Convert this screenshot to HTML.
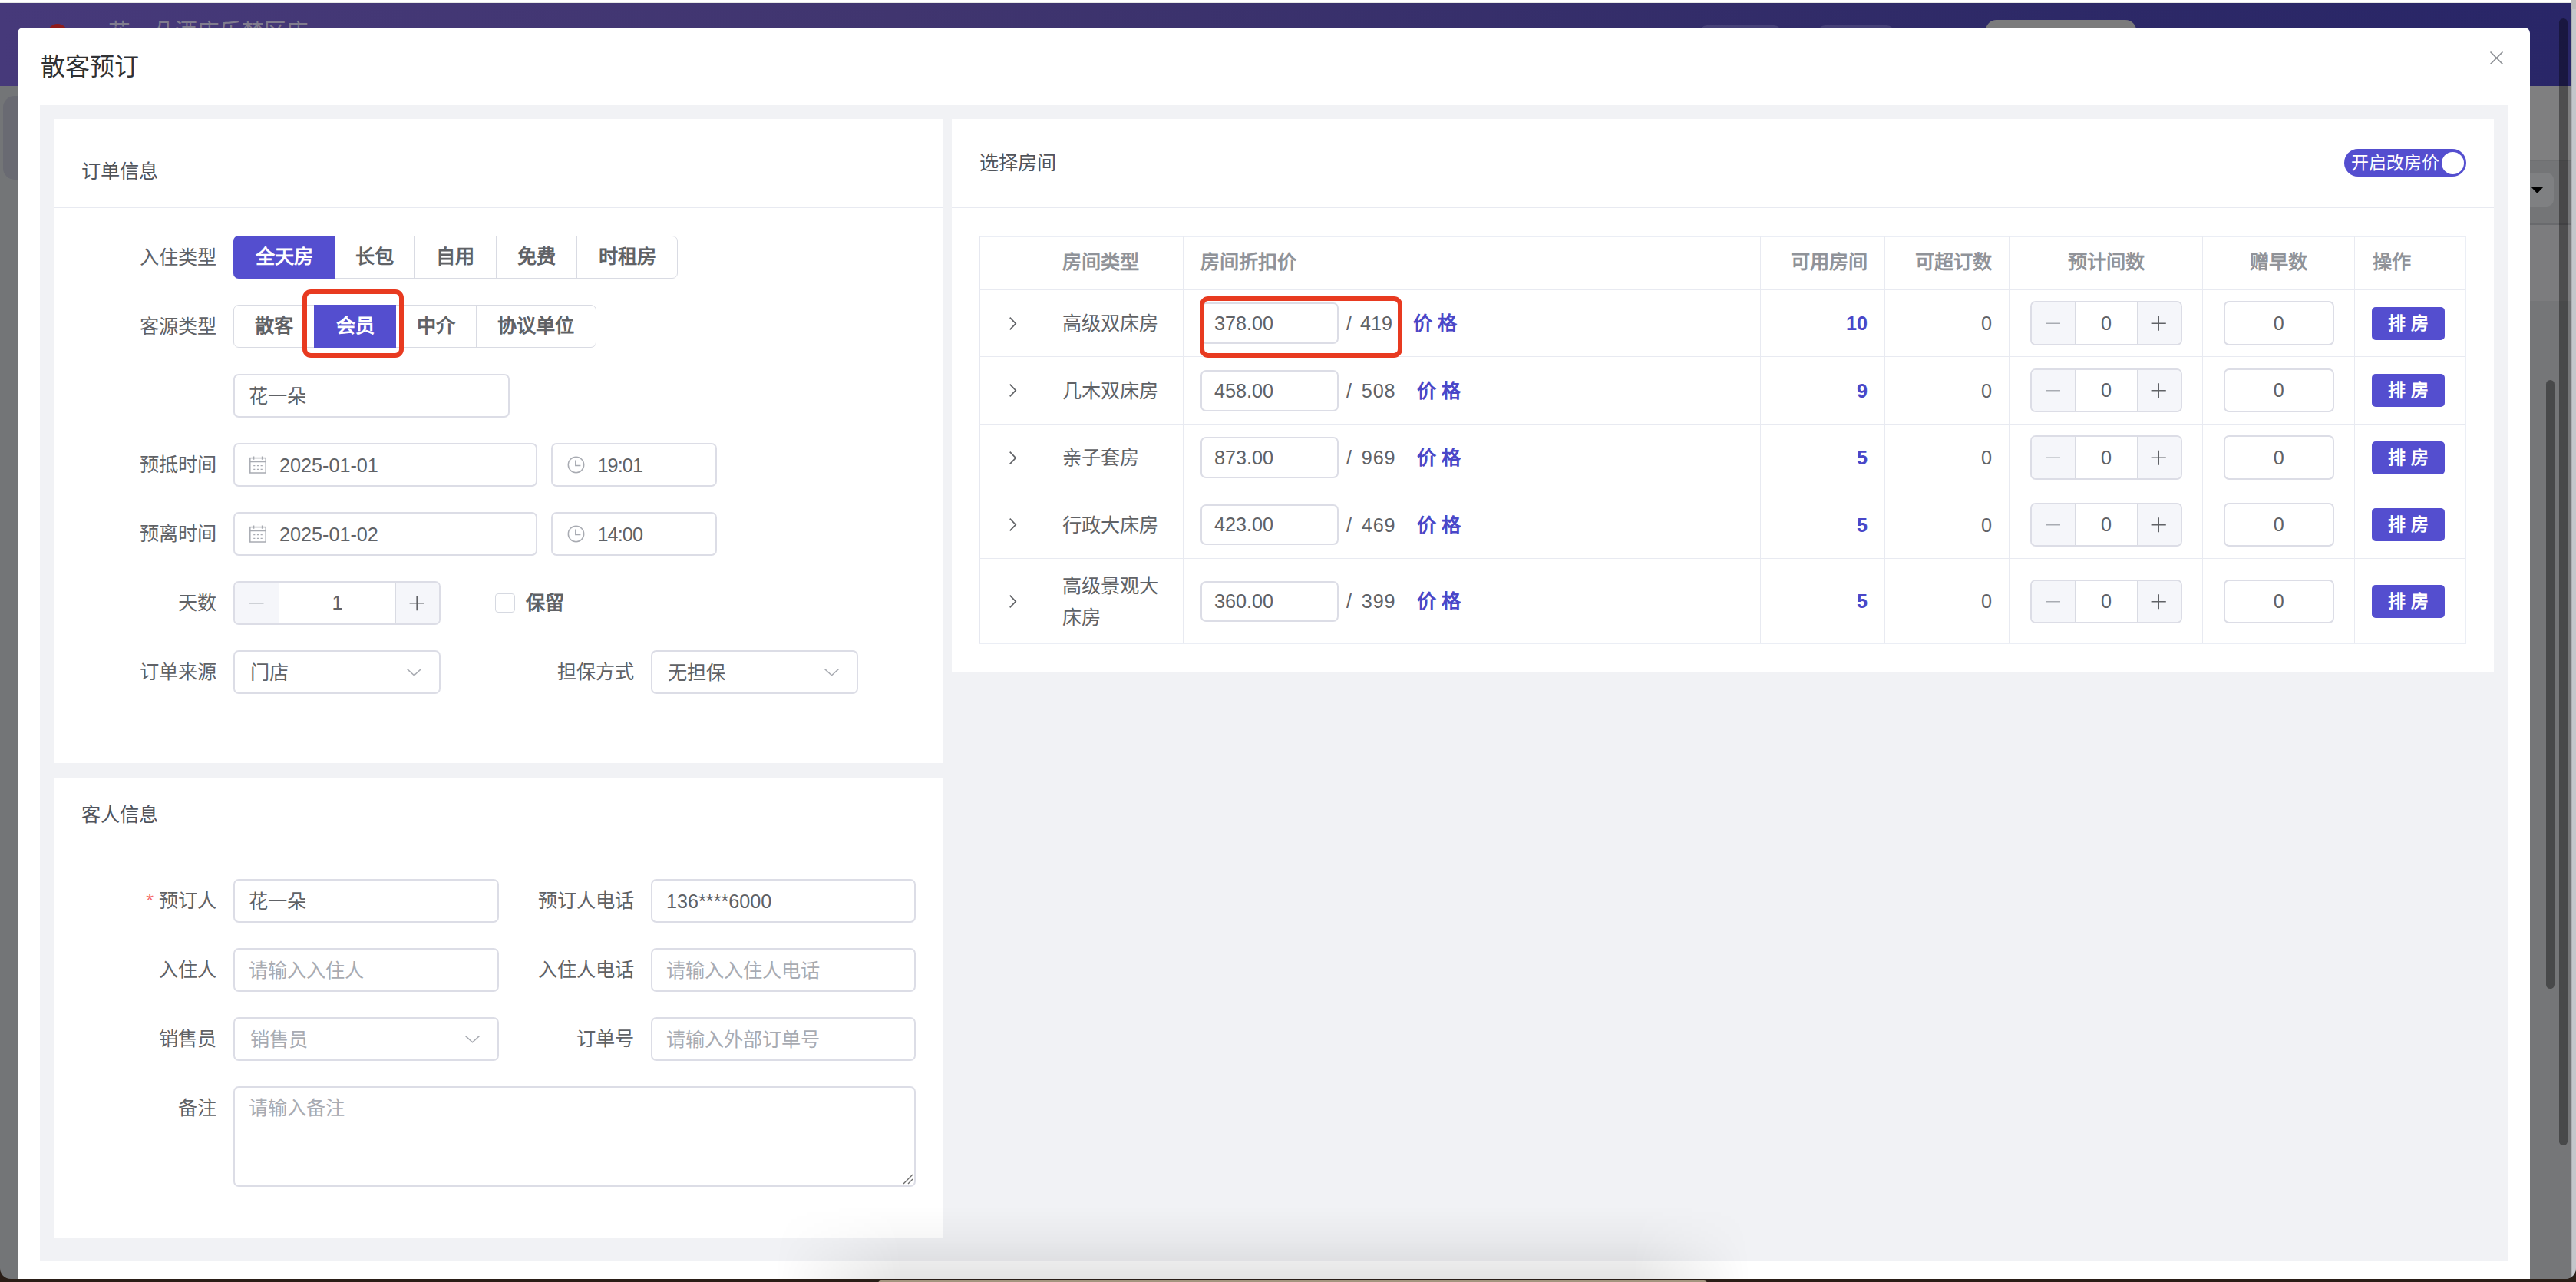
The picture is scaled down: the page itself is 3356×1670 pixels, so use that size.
<!DOCTYPE html>
<html lang="zh-CN"><head><meta charset="utf-8"><title>散客预订</title>
<style>
html,body{margin:0;padding:0}
body{width:3356px;height:1670px;overflow:hidden;background:#2a1e17;font-family:"Liberation Sans",sans-serif;font-size:25.2px;color:#606266;position:relative}
div,span{box-sizing:border-box}
.a{position:absolute}
#win{left:0;top:0;width:3356px;height:1666px;overflow:hidden;border-radius:0 0 14px 14px;background:#737577}
.t{position:absolute;white-space:nowrap;height:40px;line-height:40px}
.lbl{position:absolute;white-space:nowrap;height:57px;line-height:57px;text-align:right;color:#606266}
.inp{position:absolute;height:57px;border:2px solid #dcdde6;border-radius:7px;background:#fff;line-height:55px;padding-left:18px;white-space:nowrap;color:#606266;overflow:hidden}
.ph{color:#a8abb2}
.card{position:absolute;background:#fff}
.hr{position:absolute;height:1px;background:#e8eaf1;margin-top:1px}
.rg{position:absolute;height:56px;border:1px solid #d9dbe3;border-radius:7px;background:#fff}
.rbt{position:absolute;height:56px;line-height:55px;text-align:center;font-weight:bold;white-space:nowrap}
.num{position:absolute;height:57px;border:2px solid #dcdde6;border-radius:7px;background:#fff;overflow:hidden}
.num .b{position:absolute;top:0;height:53px;background:#f5f6fa}
.num .v{position:absolute;top:0;height:53px;line-height:53px;text-align:center;color:#606266}
.vl{position:absolute;width:1px;background:#e8eaf1}
.hl{position:absolute;height:1px;background:#e8eaf1}
.th{position:absolute;height:40px;line-height:40px;font-weight:bold;color:#909399;white-space:nowrap}
.td{position:absolute;height:41px;line-height:41px;margin-top:1px;white-space:nowrap;color:#606266}
.btn{position:absolute;width:95px;height:43px;line-height:43px;background:#544ecf;color:#fff;font-weight:bold;text-align:center;border-radius:5px;font-size:23px;white-space:nowrap}
.lnk{position:absolute;height:41px;line-height:41px;margin-top:1px;color:#4a47c8;font-weight:bold;white-space:nowrap}
.red{position:absolute;border:6px solid #e83a20;border-radius:11px}
svg{position:absolute;overflow:visible}
</style></head><body>
<div id="win" class="a">

<div class="a" style="left:0;top:0;width:3350px;height:2px;background:#fff"></div>
<div class="a" style="left:0;top:2px;width:3350px;height:2px;background:#e7e9e7"></div>
<div class="a" style="left:0;top:4px;width:3349px;height:108px;background:linear-gradient(90deg,#46397a 0%,#40356f 35%,#2d2967 80%,#292668 100%)"></div>
<div class="a" style="left:62px;top:31px;width:26px;height:26px;border-radius:50%;background:#8f1b1b"></div>
<div class="t" style="left:141px;top:21px;font-size:28.8px;color:#807c8e">花一朵酒店乐梦区店</div>
<div class="a" style="left:2587px;top:26px;width:196px;height:40px;border-radius:14px;background:#7b7b7c"></div>
<div class="a" style="left:2214px;top:33px;width:107px;height:30px;border-radius:10px;background:rgba(255,255,255,.1)"></div>
<div class="a" style="left:2368px;top:33px;width:100px;height:30px;border-radius:10px;background:rgba(255,255,255,.1)"></div>
<div class="a" style="left:3349px;top:0;width:7px;height:1670px;background:linear-gradient(90deg,#6f7072 0,#c3c6ca 2px,#c3c6ca 100%)"></div>
<div class="a" style="left:3350px;top:0;width:6px;height:12px;background:#bcbcbc"></div>
<div class="a" style="left:4px;top:125px;width:60px;height:109px;border-radius:15px;background:#696a72"></div>
<div class="a" style="left:3290px;top:112px;width:59px;height:97px;background:#7f7f80"></div>
<div class="a" style="left:3290px;top:209px;width:59px;height:83px;background:#747577"></div>
<div class="a" style="left:3290px;top:208px;width:59px;height:2px;background:#6f7072"></div>
<div class="a" style="left:3290px;top:292px;width:59px;height:100px;background:#7c7c7e"></div>
<div class="a" style="left:3290px;top:290px;width:59px;height:3px;background:#696a6d"></div>
<div class="a" style="left:3290px;top:392px;width:59px;height:1280px;background:#757678"></div>
<div class="a" style="left:3270px;top:225px;width:57px;height:44px;border-radius:9px;background:#7f8082"></div>
<svg style="left:3297px;top:243px" width="17" height="9"><path d="M0 0H17L8.5 9Z" fill="#000"/></svg>
<div class="a" style="left:3334px;top:24px;width:11px;height:1468px;border-radius:6px;background:rgba(0,0,0,.38)"></div>
<div class="a" style="left:3317px;top:495px;width:11px;height:793px;border-radius:6px;background:rgba(0,0,0,.38)"></div>
<div class="a" style="left:23px;top:36px;width:3273px;height:1660px;background:#fff;border-radius:7px"></div>
<div class="t" style="left:53px;top:65px;height:44px;line-height:44px;font-size:32px;color:#303133">散客预订</div>
<svg style="left:3244px;top:67px" width="17" height="17"><path d="M0.5 0.5L16.5 16.5M16.5 0.5L0.5 16.5" stroke="#8c8f94" stroke-width="1.7" fill="none"/></svg>
<div class="a" style="left:52px;top:137px;width:3215px;height:1506px;background:#f1f2f5"></div>
<div class="card" style="left:70px;top:155px;width:1159px;height:839px"></div>
<div class="card" style="left:70px;top:1014px;width:1159px;height:599px"></div>
<div class="card" style="left:1240px;top:155px;width:2009px;height:720px"></div>
<div class="t" style="left:106px;top:203px;color:#50545c">订单信息</div>
<div class="hr" style="left:70px;top:269px;width:1159px"></div>
<div class="t" style="left:106px;top:1041px;color:#50545c">客人信息</div>
<div class="hr" style="left:70px;top:1107px;width:1159px"></div>
<div class="t" style="left:1276px;top:192px;color:#50545c">选择房间</div>
<div class="hr" style="left:1240px;top:269px;width:2009px"></div>
<div class="a" style="left:3054px;top:194px;width:159px;height:36px;border-radius:18px;background:#544ecf"></div>
<div class="t" style="left:3063px;top:194px;height:36px;line-height:36px;font-size:23px;color:#fff">开启改房价</div>
<div class="a" style="left:3181px;top:197.5px;width:29px;height:29px;border-radius:50%;background:#fff"></div>
<div class="lbl" style="left:-18px;width:300px;top:307px">入住类型</div>
<div class="rg" style="left:304px;top:307px;width:579px"></div>
<div class="a" style="left:304px;top:307px;width:132px;height:56px;background:#544ecf;border-radius:7px 0 0 7px"></div>
<div class="rbt" style="left:304px;top:307px;width:132px;color:#fff">全天房</div>
<div class="rbt" style="left:436px;top:307px;width:104px;color:#606266">长包</div>
<div class="a" style="left:540px;top:307px;width:1px;height:56px;background:#d9dbe3"></div>
<div class="rbt" style="left:540px;top:307px;width:106px;color:#606266">自用</div>
<div class="a" style="left:646px;top:307px;width:1px;height:56px;background:#d9dbe3"></div>
<div class="rbt" style="left:646px;top:307px;width:105px;color:#606266">免费</div>
<div class="a" style="left:751px;top:307px;width:1px;height:56px;background:#d9dbe3"></div>
<div class="rbt" style="left:751px;top:307px;width:132px;color:#606266">时租房</div>
<div class="lbl" style="left:-18px;width:300px;top:397px">客源类型</div>
<div class="rg" style="left:304px;top:397px;width:472.5px"></div>
<div class="rbt" style="left:304px;top:397px;width:105px;color:#606266">散客</div>
<div class="a" style="left:409px;top:397px;width:107px;height:56px;background:#544ecf;border-radius:0"></div>
<div class="rbt" style="left:409px;top:397px;width:107px;color:#fff">会员</div>
<div class="rbt" style="left:516px;top:397px;width:104px;color:#606266">中介</div>
<div class="a" style="left:620px;top:397px;width:1px;height:56px;background:#d9dbe3"></div>
<div class="rbt" style="left:620px;top:397px;width:156.5px;color:#606266">协议单位</div>
<div class="red" style="left:394px;top:377px;width:132px;height:89px"></div>
<div class="inp" style="left:304px;top:487px;width:360px">花一朵</div>
<div class="lbl" style="left:-18px;width:300px;top:577px">预抵时间</div>
<div class="inp" style="left:304px;top:577px;width:396px;padding-left:58px">2025-01-01</div>
<svg style="left:325px;top:593.5px" width="22" height="23" fill="none" stroke="#a8abb2" stroke-width="1.5"><rect x="0.8" y="2.6" width="20.4" height="19.4"/><path d="M1 7.4H21M5.6 0.4V4.8M16.6 0.4V4.8"/><path d="M5.2 12.6H7.4M9.9 12.6H12.1M14.6 12.6H16.8M5.2 17.4H7.4M9.9 17.4H12.1M14.6 17.4H16.8" stroke-width="1.2"/></svg>
<div class="inp" style="left:718px;top:577px;width:216px;padding-left:58.5px;letter-spacing:-0.9px">19:01</div>
<svg style="left:739px;top:594px" width="23" height="23" fill="none" stroke="#a8abb2" stroke-width="1.5"><circle cx="11.5" cy="11.5" r="10.2"/><path d="M10.8 5.6V12.4H17.4"/></svg>
<div class="lbl" style="left:-18px;width:300px;top:667px">预离时间</div>
<div class="inp" style="left:304px;top:667px;width:396px;padding-left:58px">2025-01-02</div>
<svg style="left:325px;top:683.5px" width="22" height="23" fill="none" stroke="#a8abb2" stroke-width="1.5"><rect x="0.8" y="2.6" width="20.4" height="19.4"/><path d="M1 7.4H21M5.6 0.4V4.8M16.6 0.4V4.8"/><path d="M5.2 12.6H7.4M9.9 12.6H12.1M14.6 12.6H16.8M5.2 17.4H7.4M9.9 17.4H12.1M14.6 17.4H16.8" stroke-width="1.2"/></svg>
<div class="inp" style="left:718px;top:667px;width:216px;padding-left:58.5px;letter-spacing:-0.9px">14:00</div>
<svg style="left:739px;top:684px" width="23" height="23" fill="none" stroke="#a8abb2" stroke-width="1.5"><circle cx="11.5" cy="11.5" r="10.2"/><path d="M10.8 5.6V12.4H17.4"/></svg>
<div class="lbl" style="left:-18px;width:300px;top:757px">天数</div>
<div class="num" style="left:304px;top:757px;width:270px;height:57px">
<div class="b" style="left:0;width:57px;height:53px"></div>
<div class="b" style="left:210px;width:56px;height:53px"></div>
<div class="a" style="left:57px;top:0;width:1px;height:53px;background:#d9dbe3"></div>
<div class="a" style="left:209px;top:0;width:1px;height:53px;background:#d9dbe3"></div>
<div class="v" style="left:58px;width:151px;height:53px;line-height:53px">1</div>
<svg style="left:0;top:0" width="266" height="53" fill="none" stroke-width="1.6"><path d="M18.5 26.7H37.5" stroke="#a8abb2"/><path d="M227.6 26.7H246.79999999999998M237.2 17.2V36.2" stroke="#606266"/></svg>
</div>
<div class="a" style="left:645px;top:773px;width:26px;height:25px;border:1px solid #d6d9e1;border-radius:4px;background:#fff"></div>
<div class="t" style="left:685px;top:765px;font-weight:bold;color:#606266">保留</div>
<div class="lbl" style="left:-18px;width:300px;top:847px">订单来源</div>
<div class="inp" style="left:304px;top:847px;width:270px;padding-left:20px">门店</div>
<svg style="left:530px;top:870.5px" width="19" height="10" fill="none" stroke="#a8abb2" stroke-width="1.5"><path d="M0.6 0.6L9.5 8.8L18.4 0.6"/></svg>
<div class="lbl" style="left:525.5px;width:300px;top:847px">担保方式</div>
<div class="inp" style="left:848px;top:847px;width:270px;padding-left:20px">无担保</div>
<svg style="left:1074px;top:870.5px" width="19" height="10" fill="none" stroke="#a8abb2" stroke-width="1.5"><path d="M0.6 0.6L9.5 8.8L18.4 0.6"/></svg>
<div class="lbl" style="left:-18px;width:300px;top:1145px"><span style="color:#f56c6c;margin-right:7px">*</span>预订人</div>
<div class="inp" style="left:304px;top:1145px;width:346px">花一朵</div>
<div class="lbl" style="left:525.5px;width:300px;top:1145px">预订人电话</div>
<div class="inp" style="left:848px;top:1145px;width:345px">136****6000</div>
<div class="lbl" style="left:-18px;width:300px;top:1235px">入住人</div>
<div class="inp ph" style="left:304px;top:1235px;width:346px">请输入入住人</div>
<div class="lbl" style="left:525.5px;width:300px;top:1235px">入住人电话</div>
<div class="inp ph" style="left:848px;top:1235px;width:345px">请输入入住人电话</div>
<div class="lbl" style="left:-18px;width:300px;top:1325px">销售员</div>
<div class="inp ph" style="left:304px;top:1325px;width:346px;padding-left:20px">销售员</div>
<svg style="left:605.5px;top:1348.5px" width="19" height="10" fill="none" stroke="#a8abb2" stroke-width="1.5"><path d="M0.6 0.6L9.5 8.8L18.4 0.6"/></svg>
<div class="lbl" style="left:525.5px;width:300px;top:1325px">订单号</div>
<div class="inp ph" style="left:848px;top:1325px;width:345px">请输入外部订单号</div>
<div class="lbl" style="left:-18px;width:300px;top:1415px">备注</div>
<div class="inp ph" style="left:304px;top:1415px;width:889px;height:131px;line-height:52px">请输入备注</div>
<svg style="left:1176px;top:1529px" width="14" height="14" stroke="#6b6b6b" stroke-width="1.4"><path d="M13 1L1 13M13 7L7 13"/></svg>
<div class="a" style="left:1276px;top:307px;width:1937px;height:532px;border:1px solid #e6e8f0;border-top:2px solid #ebeef5;border-bottom:2px solid #ebeef5;border-right:2px solid #ebeef5;background:#fff"></div>
<div class="vl" style="left:1361px;top:307px;height:531px"></div>
<div class="vl" style="left:1541px;top:307px;height:531px"></div>
<div class="vl" style="left:2293px;top:307px;height:531px"></div>
<div class="vl" style="left:2455px;top:307px;height:531px"></div>
<div class="vl" style="left:2617px;top:307px;height:531px"></div>
<div class="vl" style="left:2869px;top:307px;height:531px"></div>
<div class="vl" style="left:3067px;top:307px;height:531px"></div>
<div class="hl" style="left:1276px;top:377px;width:1936px"></div>
<div class="hl" style="left:1276px;top:464px;width:1936px"></div>
<div class="hl" style="left:1276px;top:552px;width:1936px"></div>
<div class="hl" style="left:1276px;top:639px;width:1936px"></div>
<div class="hl" style="left:1276px;top:727px;width:1936px"></div>
<div class="th" style="left:1384px;top:321px">房间类型</div>
<div class="th" style="left:1564px;top:321px">房间折扣价</div>
<div class="th" style="left:2132.5px;width:300px;text-align:right;top:321px">可用房间</div>
<div class="th" style="left:2295px;width:300px;text-align:right;top:321px">可超订数</div>
<div class="th" style="left:2593.5px;width:300px;text-align:center;top:321px">预计间数</div>
<div class="th" style="left:2818.5px;width:300px;text-align:center;top:321px">赠早数</div>
<div class="th" style="left:3091px;top:321px">操作</div>
<svg style="left:1315px;top:412.5px" width="9" height="17" fill="none" stroke="#606266" stroke-width="1.7"><path d="M0.7 0.7L8.2 8.5L0.7 16.3"/></svg>
<div class="td" style="left:1384px;top:400.0px">高级双床房</div>
<div class="inp" style="left:1564px;top:394px;width:179.5px;height:54px;line-height:50px;padding-left:16px">378.00</div>
<div class="td" style="left:1754px;top:400.0px;word-spacing:4px;letter-spacing:0">/ 419</div>
<div class="lnk" style="left:1841px;top:400.0px">价 格</div>
<div class="td" style="left:2133px;width:300px;text-align:right;top:400.0px;color:#4a47c8;font-weight:bold">10</div>
<div class="td" style="left:2295px;width:300px;text-align:right;top:400.0px">0</div>
<div class="num" style="left:2645px;top:392px;width:198px;height:58px">
<div class="b" style="left:0;width:56px;height:54px"></div>
<div class="b" style="left:138px;width:56px;height:54px"></div>
<div class="a" style="left:56px;top:0;width:1px;height:54px;background:#d9dbe3"></div>
<div class="a" style="left:137px;top:0;width:1px;height:54px;background:#d9dbe3"></div>
<div class="v" style="left:57px;width:80px;height:54px;line-height:54px">0</div>
<svg style="left:0;top:0" width="194" height="54" fill="none" stroke-width="1.6"><path d="M18.0 27.2H37.0" stroke="#a8abb2"/><path d="M155.6 27.2H174.79999999999998M165.2 17.7V36.7" stroke="#606266"/></svg>
</div>
<div class="inp" style="left:2897px;top:392px;width:143.5px;height:58px;line-height:54px;padding:0;text-align:center">0</div>
<div class="btn" style="left:3090px;top:400px">排 房</div>
<svg style="left:1315px;top:500.0px" width="9" height="17" fill="none" stroke="#606266" stroke-width="1.7"><path d="M0.7 0.7L8.2 8.5L0.7 16.3"/></svg>
<div class="td" style="left:1384px;top:487.5px">几木双床房</div>
<div class="inp" style="left:1564px;top:482px;width:179.5px;height:54px;line-height:50px;padding-left:16px">458.00</div>
<div class="td" style="left:1754px;top:487.5px;word-spacing:4px;letter-spacing:0.9px">/ 508</div>
<div class="lnk" style="left:1846px;top:487.5px">价 格</div>
<div class="td" style="left:2133px;width:300px;text-align:right;top:487.5px;color:#4a47c8;font-weight:bold">9</div>
<div class="td" style="left:2295px;width:300px;text-align:right;top:487.5px">0</div>
<div class="num" style="left:2645px;top:480px;width:198px;height:57px">
<div class="b" style="left:0;width:56px;height:53px"></div>
<div class="b" style="left:138px;width:56px;height:53px"></div>
<div class="a" style="left:56px;top:0;width:1px;height:53px;background:#d9dbe3"></div>
<div class="a" style="left:137px;top:0;width:1px;height:53px;background:#d9dbe3"></div>
<div class="v" style="left:57px;width:80px;height:53px;line-height:53px">0</div>
<svg style="left:0;top:0" width="194" height="53" fill="none" stroke-width="1.6"><path d="M18.0 26.7H37.0" stroke="#a8abb2"/><path d="M155.6 26.7H174.79999999999998M165.2 17.2V36.2" stroke="#606266"/></svg>
</div>
<div class="inp" style="left:2897px;top:480px;width:143.5px;height:57px;line-height:53px;padding:0;text-align:center">0</div>
<div class="btn" style="left:3090px;top:487px">排 房</div>
<svg style="left:1315px;top:587.5px" width="9" height="17" fill="none" stroke="#606266" stroke-width="1.7"><path d="M0.7 0.7L8.2 8.5L0.7 16.3"/></svg>
<div class="td" style="left:1384px;top:575.0px">亲子套房</div>
<div class="inp" style="left:1564px;top:569px;width:179.5px;height:54px;line-height:50px;padding-left:16px">873.00</div>
<div class="td" style="left:1754px;top:575.0px;word-spacing:4px;letter-spacing:0.9px">/ 969</div>
<div class="lnk" style="left:1846px;top:575.0px">价 格</div>
<div class="td" style="left:2133px;width:300px;text-align:right;top:575.0px;color:#4a47c8;font-weight:bold">5</div>
<div class="td" style="left:2295px;width:300px;text-align:right;top:575.0px">0</div>
<div class="num" style="left:2645px;top:567px;width:198px;height:58px">
<div class="b" style="left:0;width:56px;height:54px"></div>
<div class="b" style="left:138px;width:56px;height:54px"></div>
<div class="a" style="left:56px;top:0;width:1px;height:54px;background:#d9dbe3"></div>
<div class="a" style="left:137px;top:0;width:1px;height:54px;background:#d9dbe3"></div>
<div class="v" style="left:57px;width:80px;height:54px;line-height:54px">0</div>
<svg style="left:0;top:0" width="194" height="54" fill="none" stroke-width="1.6"><path d="M18.0 27.2H37.0" stroke="#a8abb2"/><path d="M155.6 27.2H174.79999999999998M165.2 17.7V36.7" stroke="#606266"/></svg>
</div>
<div class="inp" style="left:2897px;top:567px;width:143.5px;height:58px;line-height:54px;padding:0;text-align:center">0</div>
<div class="btn" style="left:3090px;top:575px">排 房</div>
<svg style="left:1315px;top:675.0px" width="9" height="17" fill="none" stroke="#606266" stroke-width="1.7"><path d="M0.7 0.7L8.2 8.5L0.7 16.3"/></svg>
<div class="td" style="left:1384px;top:662.5px">行政大床房</div>
<div class="inp" style="left:1564px;top:657px;width:179.5px;height:53px;line-height:49px;padding-left:16px">423.00</div>
<div class="td" style="left:1754px;top:662.5px;word-spacing:4px;letter-spacing:0.9px">/ 469</div>
<div class="lnk" style="left:1846px;top:662.5px">价 格</div>
<div class="td" style="left:2133px;width:300px;text-align:right;top:662.5px;color:#4a47c8;font-weight:bold">5</div>
<div class="td" style="left:2295px;width:300px;text-align:right;top:662.5px">0</div>
<div class="num" style="left:2645px;top:655px;width:198px;height:57px">
<div class="b" style="left:0;width:56px;height:53px"></div>
<div class="b" style="left:138px;width:56px;height:53px"></div>
<div class="a" style="left:56px;top:0;width:1px;height:53px;background:#d9dbe3"></div>
<div class="a" style="left:137px;top:0;width:1px;height:53px;background:#d9dbe3"></div>
<div class="v" style="left:57px;width:80px;height:53px;line-height:53px">0</div>
<svg style="left:0;top:0" width="194" height="53" fill="none" stroke-width="1.6"><path d="M18.0 26.7H37.0" stroke="#a8abb2"/><path d="M155.6 26.7H174.79999999999998M165.2 17.2V36.2" stroke="#606266"/></svg>
</div>
<div class="inp" style="left:2897px;top:655px;width:143.5px;height:57px;line-height:53px;padding:0;text-align:center">0</div>
<div class="btn" style="left:3090px;top:662px">排 房</div>
<svg style="left:1315px;top:774.5px" width="9" height="17" fill="none" stroke="#606266" stroke-width="1.7"><path d="M0.7 0.7L8.2 8.5L0.7 16.3"/></svg>
<div class="td" style="left:1384px;top:741.5px;height:82px;white-space:normal">高级景观大<br>床房</div>
<div class="inp" style="left:1564px;top:757px;width:179.5px;height:53px;line-height:49px;padding-left:16px">360.00</div>
<div class="td" style="left:1754px;top:762.0px;word-spacing:4px;letter-spacing:0.9px">/ 399</div>
<div class="lnk" style="left:1846px;top:762.0px">价 格</div>
<div class="td" style="left:2133px;width:300px;text-align:right;top:762.0px;color:#4a47c8;font-weight:bold">5</div>
<div class="td" style="left:2295px;width:300px;text-align:right;top:762.0px">0</div>
<div class="num" style="left:2645px;top:755px;width:198px;height:57px">
<div class="b" style="left:0;width:56px;height:53px"></div>
<div class="b" style="left:138px;width:56px;height:53px"></div>
<div class="a" style="left:56px;top:0;width:1px;height:53px;background:#d9dbe3"></div>
<div class="a" style="left:137px;top:0;width:1px;height:53px;background:#d9dbe3"></div>
<div class="v" style="left:57px;width:80px;height:53px;line-height:53px">0</div>
<svg style="left:0;top:0" width="194" height="53" fill="none" stroke-width="1.6"><path d="M18.0 26.7H37.0" stroke="#a8abb2"/><path d="M155.6 26.7H174.79999999999998M165.2 17.2V36.2" stroke="#606266"/></svg>
</div>
<div class="inp" style="left:2897px;top:755px;width:143.5px;height:57px;line-height:53px;padding:0;text-align:center">0</div>
<div class="btn" style="left:3090px;top:762px">排 房</div>
<div class="red" style="left:1563px;top:386px;width:264px;height:80px"></div>
<div class="a" style="left:1010px;top:1572px;width:1270px;height:94px;background:linear-gradient(180deg,rgba(0,0,0,0) 0%,rgba(0,0,0,.035) 45%,rgba(0,0,0,.105) 100%);-webkit-mask-image:linear-gradient(90deg,transparent 0,#000 13%,#000 88%,transparent 100%);mask-image:linear-gradient(90deg,transparent 0,#000 13%,#000 88%,transparent 100%)"></div>
</div>
<div class="a" style="left:1144px;top:1667.5px;width:1080px;height:4px;background:#a4957f;border-radius:6px 6px 0 0"></div>
</body></html>
